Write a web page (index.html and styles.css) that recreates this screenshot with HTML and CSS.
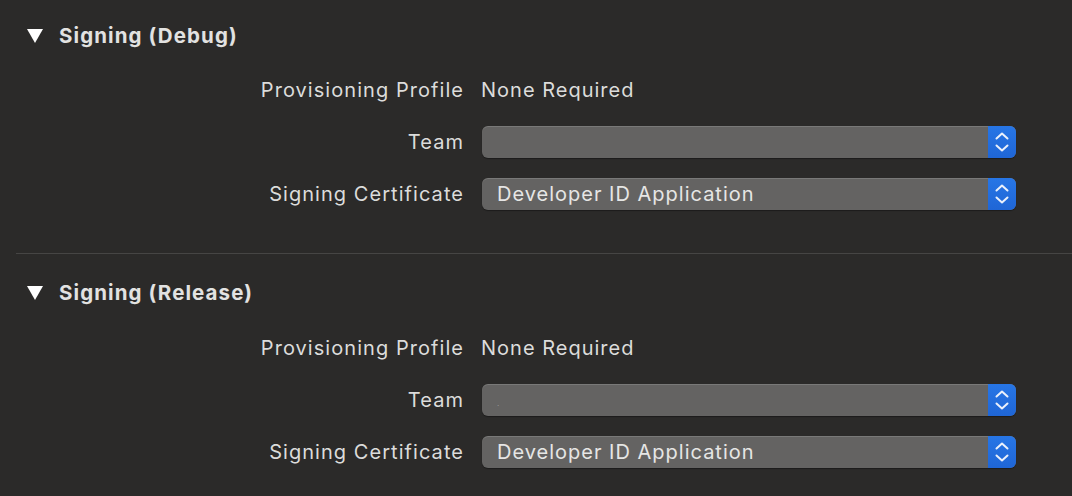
FILE: index.html
```html
<!DOCTYPE html>
<html>
<head>
<meta charset="utf-8">
<link rel="stylesheet" href="styles.css">
</head>
<body>
<div class="pane">
  <section class="section">
    <div class="heading">
      <span class="disclosure"></span>
      <span class="title">Signing (Debug)</span>
    </div>
    <div class="form">
      <div class="label">Provisioning Profile</div>
      <div class="value">None Required</div>
      <div class="label">Team</div>
      <div class="popup"><span class="popup-text"></span><span class="stepper"><svg width="14" height="20" viewBox="0 0 14 20"><path d="M1.5 6.5 L7 1.5 L12.5 6.5 M1.5 13.5 L7 18.5 L12.5 13.5" fill="none" stroke="#eaf0fb" stroke-width="2" stroke-linecap="round" stroke-linejoin="round"/></svg></span></div>
      <div class="label">Signing Certificate</div>
      <div class="popup"><span class="popup-text">Developer ID Application</span><span class="stepper"><svg width="14" height="20" viewBox="0 0 14 20"><path d="M1.5 6.5 L7 1.5 L12.5 6.5 M1.5 13.5 L7 18.5 L12.5 13.5" fill="none" stroke="#eaf0fb" stroke-width="2" stroke-linecap="round" stroke-linejoin="round"/></svg></span></div>
    </div>
  </section>
  <section class="section second">
    <div class="heading">
      <span class="disclosure"></span>
      <span class="title">Signing (Release)</span>
    </div>
    <div class="form">
      <div class="label">Provisioning Profile</div>
      <div class="value">None Required</div>
      <div class="label">Team</div>
      <div class="popup"><span class="popup-text"><span class="dot">.</span></span><span class="stepper"><svg width="14" height="20" viewBox="0 0 14 20"><path d="M1.5 6.5 L7 1.5 L12.5 6.5 M1.5 13.5 L7 18.5 L12.5 13.5" fill="none" stroke="#eaf0fb" stroke-width="2" stroke-linecap="round" stroke-linejoin="round"/></svg></span></div>
      <div class="label">Signing Certificate</div>
      <div class="popup"><span class="popup-text">Developer ID Application</span><span class="stepper"><svg width="14" height="20" viewBox="0 0 14 20"><path d="M1.5 6.5 L7 1.5 L12.5 6.5 M1.5 13.5 L7 18.5 L12.5 13.5" fill="none" stroke="#eaf0fb" stroke-width="2" stroke-linecap="round" stroke-linejoin="round"/></svg></span></div>
    </div>
  </section>
</div>
</body>
</html>
```
FILE: styles.css
```css
html, body {
  margin: 0;
  padding: 0;
  background: #2b2a29;
}
body {
  width: 1072px;
  height: 496px;
  overflow: hidden;
  font-family: Inter, "Noto Sans", sans-serif;
  color: #dfdfde;
}
.pane {
  display: flex;
  flex-direction: column;
}
.section {
  padding-bottom: 33px;
}
.section.second {
  margin-left: 16px;
  border-top: 1px solid #464544;
  padding-top: 3px;
}
.section.second .heading {
  margin-left: -16px;
}
.section.second .form {
  margin-left: -16px;
  margin-top: 5px;
}
.heading {
  display: flex;
  align-items: center;
  height: 50px;
  padding-top: 10px;
}
.disclosure {
  width: 0;
  height: 0;
  margin-left: 27px;
  margin-right: 16px;
  border-left: 8px solid transparent;
  border-right: 8px solid transparent;
  border-top: 14px solid #ffffff;
  margin-top: 1px;
}
.title {
  font-size: 20.5px;
  font-weight: 700;
  color: #e2e2e1;
  letter-spacing: 1.1px;
}
.form {
  margin-top: 4px;
  display: grid;
  grid-template-columns: 463px 534px;
  grid-auto-rows: 52px;
  column-gap: 19px;
  align-items: center;
}
.label {
  text-align: right;
  font-size: 20px;
  letter-spacing: 1.05px;
  margin-right: -1px;
  color: #dcdcdb;
}
.value {
  margin-left: -1px;
  font-size: 20px;
  letter-spacing: 1px;
  color: #dcdcdb;
}
.popup {
  height: 32px;
  display: flex;
  border-radius: 6px;
  overflow: hidden;
  background: #646362;
  box-shadow: inset 0 1px 0 rgba(255,255,255,0.14), 0 1px 1px rgba(0,0,0,0.35);
}
.popup-text {
  flex: 1;
  display: flex;
  align-items: center;
  padding-left: 15px;
  font-size: 20px;
  letter-spacing: 1px;
  color: #e6e6e5;
}
.dot {
  font-size: 8px;
  color: #9a9998;
  margin-top: 6px;
}
.stepper {
  width: 28px;
  display: flex;
  align-items: center;
  justify-content: center;
  background: linear-gradient(#2776e6, #1f66d6);
}
```
